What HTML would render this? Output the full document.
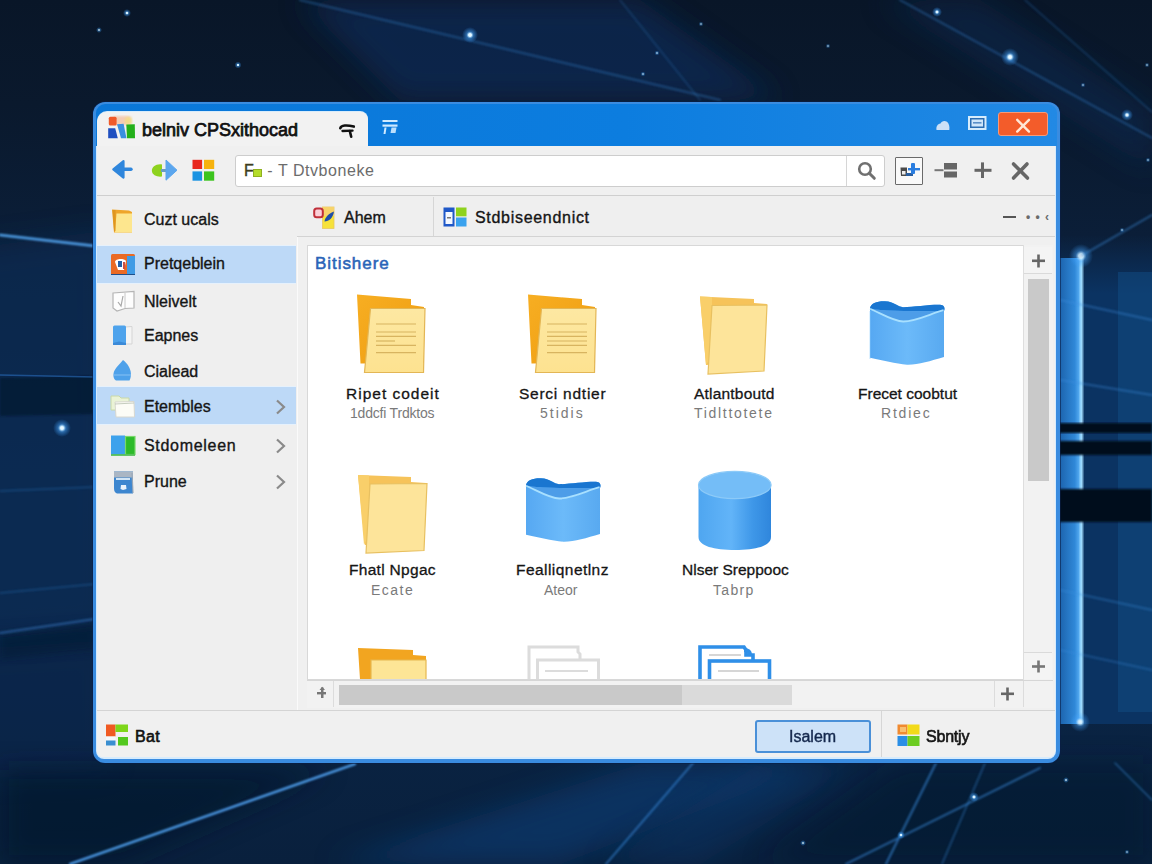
<!DOCTYPE html>
<html><head><meta charset="utf-8">
<style>
*{margin:0;padding:0;box-sizing:border-box}
html,body{width:1152px;height:864px;overflow:hidden}
body{position:relative;font-family:"Liberation Sans",sans-serif;background:#0a1a33;}
.a{position:absolute}
svg{position:absolute;overflow:visible}
#win{left:93px;top:102px;width:967px;height:661px;border-radius:12px;background:#3a8ce0;box-shadow:0 0 0 1px rgba(10,30,70,.6)}
#titlebar{left:96px;top:104px;width:961px;height:42px;background:linear-gradient(90deg,#0a77d8,#0c7ddf 55%,#2289e4);border-radius:9px 9px 0 0}
#tab{left:97px;top:112px;width:271px;height:34px;background:#f2f2f2;border-radius:10px 8px 0 0;box-shadow:0 -1px 0 #d8ecfb}
#inner{left:97px;top:146px;width:958px;height:611px;background:#f0f0f0;border-radius:0 0 6px 6px;overflow:hidden}
.t{position:absolute;white-space:nowrap;line-height:1}
.txt{color:#151515;font-size:16px;-webkit-text-stroke:.35px #151515}
#toolline{left:97px;top:195px;width:958px;height:1px;background:#cfcfcf}
#addr{left:235px;top:155px;width:650px;height:32px;background:#fff;border:1px solid #cdcdcd;border-radius:3px}
#addrdiv{left:846px;top:156px;width:1px;height:30px;background:#d6d6d6}
#sidebar{left:97px;top:196px;width:201px;height:514px;background:#efefef;border-right:1px solid #fafafa}
.sel{position:absolute;left:97px;width:199px;background:#bdd9f7;box-shadow:0 -1px 0 #e6f1fc,0 1px 0 #e6f1fc}
#tabstrip{left:297px;top:196px;width:758px;height:41px;background:#efefef;border-bottom:1px solid #d3d3d3}
#tabdiv{left:433px;top:197px;width:1px;height:39px;background:#d6d6d6}
#pane{left:307px;top:245px;width:716px;height:435px;background:#fff;border:1px solid #d8d8d8;border-right:none;overflow:hidden}
#vscroll{left:1023px;top:245px;width:30px;height:435px;background:#f2f2f2;border-left:1px solid #dedede}
#hscroll{left:307px;top:680px;width:746px;height:28px;background:#f2f2f2;border-top:1px solid #d6d6d6}
#status{left:97px;top:710px;width:958px;height:47px;background:#f0f0f0;border-top:1px solid #d4d4d4;border-radius:0 0 6px 6px}
</style></head><body>
<svg class="a" style="left:0;top:0" width="1152" height="864" viewBox="0 0 1152 864">
<defs>
<linearGradient id="bgv" x1="0" y1="0" x2="0" y2="1">
<stop offset="0" stop-color="#091628"/>
<stop offset="0.12" stop-color="#0a192d"/>
<stop offset="0.3" stop-color="#0b1f3a"/>
<stop offset="0.55" stop-color="#0b2446"/>
<stop offset="0.8" stop-color="#0a2444"/>
<stop offset="1" stop-color="#09203d"/>
</linearGradient>
<linearGradient id="panelR" x1="0" y1="0" x2="1" y2="0">
<stop offset="0" stop-color="#1a5fa8"/>
<stop offset="0.7" stop-color="#2f88d8"/>
<stop offset="1" stop-color="#6cc0ff"/>
</linearGradient>
<radialGradient id="star" cx="0.5" cy="0.5" r="0.5">
<stop offset="0" stop-color="#ffffff"/>
<stop offset="0.2" stop-color="#cfeeff"/>
<stop offset="0.45" stop-color="#4aa8ff" stop-opacity=".5"/>
<stop offset="1" stop-color="#3aa0ff" stop-opacity="0"/>
</radialGradient>
<filter id="b1" x="-10%" y="-10%" width="120%" height="120%"><feGaussianBlur stdDeviation="1"/></filter>
<filter id="b3" x="-10%" y="-10%" width="120%" height="120%"><feGaussianBlur stdDeviation="3"/></filter>
<filter id="b12" x="-30%" y="-30%" width="160%" height="160%"><feGaussianBlur stdDeviation="14"/></filter>
</defs>
<rect width="1152" height="864" fill="url(#bgv)"/>
<!-- left blue haze -->
<polygon points="-40,250 110,230 110,630 -40,640" fill="#0d3060" opacity=".45" filter="url(#b12)"/>
<polygon points="0,636 95,624 95,650 0,660" fill="#06142a" opacity=".5" filter="url(#b3)"/>
<polygon points="-40,650 110,640 110,770 -40,780" fill="#0c2c58" opacity=".3" filter="url(#b12)"/>
<!-- dark band left -->
<polygon points="0,378 95,376 95,414 0,416" fill="#06142a" opacity=".62" filter="url(#b1)"/>
<line x1="0" y1="375" x2="95" y2="377" stroke="#2f7ad0" stroke-width="1.5" opacity=".5"/>
<!-- bottom: dark left, lighter diagonal bands -->
<polygon points="0,770 330,770 120,864 0,864" fill="#061529" opacity=".6" filter="url(#b12)"/>
<polygon points="330,864 640,764 820,764 560,864" fill="#11417a" opacity=".55" filter="url(#b12)"/>
<polygon points="600,864 760,764 860,764 700,864" fill="#11417a" opacity=".35" filter="url(#b12)"/>
<polygon points="760,864 900,764 1152,764 1152,864" fill="#061529" opacity=".45" filter="url(#b12)"/>
<!-- top beams -->
<polygon points="300,0 640,0 780,100 400,100" fill="#0e2c56" opacity=".7" filter="url(#b12)"/>
<polygon points="880,0 980,0 1152,110 1152,170" fill="#0e2c52" opacity=".5" filter="url(#b12)"/>
<!-- right panel -->
<linearGradient id="pTop" x1="0" y1="0" x2="0" y2="1"><stop offset="0" stop-color="#0b3362" stop-opacity="0"/><stop offset="0.12" stop-color="#0b3362"/><stop offset="1" stop-color="#0b3362"/></linearGradient>
<rect x="1060" y="235" width="92" height="489" fill="url(#pTop)"/>
<rect x="1118" y="272" width="34" height="440" fill="#134a82" opacity=".55"/>
<rect x="1058" y="258" width="24" height="466" fill="url(#panelR)"/>
<rect x="1080" y="256" width="3" height="468" fill="#a6e0ff" filter="url(#b1)"/>
<rect x="1056" y="423" width="96" height="10" fill="#050f1f" filter="url(#b1)"/>
<rect x="1056" y="441" width="96" height="14" fill="#050f1f" filter="url(#b1)"/>
<rect x="1056" y="489" width="96" height="33" fill="#050f1f" filter="url(#b1)"/>
<circle cx="1081" cy="256" r="12" fill="url(#star)" opacity=".9"/>
<circle cx="1080" cy="722" r="10" fill="url(#star)" opacity=".8"/>
<!-- light lines -->
<g stroke="#3c8fe0" fill="none" stroke-linecap="round" filter="url(#b1)">
<line x1="0" y1="235" x2="95" y2="246" stroke-width="2.5" stroke="#5ab0ff" opacity=".9"/>
<line x1="0" y1="491" x2="95" y2="487" stroke-width="1.5" opacity=".3"/>
<line x1="0" y1="593" x2="95" y2="584" stroke-width="1.5" opacity=".3"/>
<line x1="0" y1="633" x2="95" y2="619" stroke-width="2" stroke="#3f8ee0" opacity=".5"/>
<line x1="70" y1="864" x2="355" y2="764" stroke-width="2.2" stroke="#56acff" opacity="1"/>
<line x1="693" y1="763" x2="606" y2="864" stroke-width="1.8" stroke="#3f98f0" opacity=".6"/>
<line x1="936" y1="763" x2="886" y2="864" stroke-width="1.8" stroke="#3f98f0" opacity=".6"/>
<line x1="985" y1="763" x2="942" y2="864" stroke-width="1.5" opacity=".45"/>
<line x1="1040" y1="768" x2="846" y2="864" stroke-width="1.8" stroke="#3f98f0" opacity=".6"/>
<line x1="1115" y1="763" x2="1152" y2="800" stroke-width="1.5" opacity=".5"/>
<line x1="300" y1="0" x2="720" y2="100" stroke-width="2" opacity=".35"/>
<line x1="620" y1="0" x2="700" y2="100" stroke-width="1.5" opacity=".25"/>
<line x1="900" y1="0" x2="1152" y2="138" stroke-width="1.8" opacity=".4"/>
<line x1="1025" y1="0" x2="1152" y2="112" stroke-width="1.5" opacity=".3"/>
<line x1="1081" y1="256" x2="1152" y2="215" stroke-width="1.8" opacity=".5"/>
<line x1="1060" y1="300" x2="1152" y2="320" stroke-width="2" opacity=".4"/>
<line x1="1060" y1="380" x2="1152" y2="395" stroke-width="2" opacity=".4"/>
<line x1="1060" y1="590" x2="1152" y2="610" stroke-width="2" opacity=".35"/>
<line x1="1060" y1="650" x2="1152" y2="670" stroke-width="2" opacity=".3"/>
</g>
<!-- stars -->
<g>
<circle cx="470" cy="35" r="8" fill="url(#star)"/>
<circle cx="1010" cy="57" r="9" fill="url(#star)"/>
<circle cx="937" cy="12" r="5" fill="url(#star)"/>
<circle cx="127" cy="13" r="4" fill="url(#star)"/>
<circle cx="238" cy="65" r="3.5" fill="url(#star)"/>
<circle cx="99" cy="30" r="3" fill="url(#star)" opacity=".8"/>
<circle cx="62" cy="428" r="9" fill="url(#star)"/>
<circle cx="1127" cy="115" r="6" fill="url(#star)"/>
<circle cx="1147" cy="65" r="2.5" fill="url(#star)" opacity=".7"/>
<circle cx="1148" cy="160" r="2.5" fill="url(#star)" opacity=".7"/>
<circle cx="1122" cy="230" r="2.5" fill="url(#star)" opacity=".7"/>
<circle cx="1083" cy="85" r="2.5" fill="url(#star)" opacity=".7"/>
<circle cx="657" cy="53" r="2.5" fill="url(#star)" opacity=".8"/>
<circle cx="643" cy="74" r="2.5" fill="url(#star)" opacity=".8"/>
<circle cx="701" cy="24" r="2.5" fill="url(#star)" opacity=".7"/>
<circle cx="828" cy="46" r="2.5" fill="url(#star)" opacity=".7"/>
<circle cx="974" cy="797" r="5" fill="url(#star)"/>
<circle cx="901" cy="835" r="4" fill="url(#star)"/>
<circle cx="1066" cy="780" r="3" fill="url(#star)" opacity=".8"/>
<circle cx="803" cy="843" r="3" fill="url(#star)" opacity=".8"/>
<circle cx="1127" cy="852" r="2.5" fill="url(#star)" opacity=".7"/>
</g>
</svg>
<div id="win" class="a"></div>
<div id="titlebar" class="a"></div>
<div id="tab" class="a"></div>
<div class="a" style="left:96px;top:146px;width:960px;height:613px;background:#d6ebfd;border-radius:0 0 8px 8px"></div>
<div id="inner" class="a"></div>
<div id="toolline" class="a"></div>
<div id="addr" class="a"></div>
<div id="addrdiv" class="a"></div>
<div id="sidebar" class="a"></div>
<div class="sel" style="top:246px;height:37px"></div>
<div class="sel" style="top:387px;height:37px"></div>
<div id="tabstrip" class="a"></div>
<div id="tabdiv" class="a"></div>
<div id="pane" class="a"></div>
<div id="vscroll" class="a"></div>
<div id="hscroll" class="a"></div>
<div id="status" class="a"></div>

<!-- title icon -->
<svg style="left:106px;top:114px" width="32" height="28" viewBox="0 0 32 28">
<defs><filter id="tib"><feGaussianBlur stdDeviation="1.3"/></filter></defs>
<rect x="7" y="2" width="18" height="9" rx="3" fill="#f6b48a" opacity=".6" filter="url(#tib)"/>
<rect x="19" y="3" width="7" height="8" rx="3" fill="#f3e27a" opacity=".7" filter="url(#tib)"/>
<rect x="2.8" y="2.8" width="7.8" height="8.8" rx="1.5" fill="#f05a2a"/>
<polygon points="2.2,14.2 9.2,14.2 11.8,24.3 2.2,24.3" fill="#1f4fc0"/>
<path d="M11,10.2 L17.6,9.8 L20.5,24.3 L15,24.3 Z" fill="#3a8fe0"/>
<path d="M20.3,10.6 L28.8,10.3 L29,24.3 L21,24.3 Z" fill="#24b01a"/>
</svg>
<div class="t" style="left:142px;top:121px;font-size:18px;color:#111;-webkit-text-stroke:.75px #111;letter-spacing:0px">belniv CPSxithocad</div>
<!-- Я glyph -->
<svg style="left:338px;top:123px" width="18" height="16" viewBox="0 0 18 16">
<path d="M2.3,5.2 C3,2 9,1.8 15.8,3.6" stroke="#111" stroke-width="2.6" fill="none" stroke-linecap="round"/>
<path d="M4.5,8 L14.5,7.6" stroke="#111" stroke-width="2.4" fill="none" stroke-linecap="round"/>
<path d="M11.8,8 L13.2,13.8" stroke="#111" stroke-width="2.6" fill="none" stroke-linecap="round"/>
</svg>
<!-- titlebar small icon -->
<svg style="left:381px;top:119px" width="18" height="17" viewBox="0 0 18 17">
<rect x="1.5" y="1" width="15" height="2" fill="#cfeaff"/>
<rect x="1.5" y="5.5" width="15" height="2.2" fill="#cfeaff"/>
<path d="M3.5,8.5 L5.5,8.5 L4.5,15 L2.5,15 Z" fill="#cfeaff"/>
<path d="M10.5,8.5 L15.5,8.5 L14.5,14 L9.5,14 Z" fill="#cfeaff" opacity=".9"/>
</svg>
<!-- cloud -->
<svg style="left:935px;top:118px" width="16" height="14" viewBox="0 0 16 14">
<path d="M1.5,12 C1,8.5 2.5,6 5.5,5.5 C6.5,3 9.5,2 12,3.8 C14,5.5 14.8,8.5 14.3,12 Z" fill="#cde0f6"/>
</svg>
<!-- maximize -->
<svg style="left:967px;top:115px" width="21" height="17" viewBox="0 0 21 17">
<rect x="1" y="1" width="18.5" height="14" fill="#d6ecfc"/>
<rect x="3" y="3" width="14.5" height="10" fill="#2a6db3"/>
<rect x="4.5" y="4.5" width="11.5" height="7" fill="#cfe6fa"/>
<rect x="6" y="7" width="8.5" height="1.6" fill="#5a8fc8"/>
</svg>
<!-- close -->
<div class="a" style="left:998px;top:112px;width:50px;height:24px;background:#f35c2a;border:1px solid #f79a78;border-radius:3px"></div>
<svg style="left:1014px;top:117px" width="18" height="17" viewBox="0 0 18 17">
<path d="M3.2,2.8 L15,14.6 M15,2.8 L3.2,14.6" stroke="#ffe6d6" stroke-width="2.4" stroke-linecap="round"/>
</svg>

<!-- nav icons -->
<svg style="left:110px;top:158px" width="24" height="24" viewBox="0 0 24 24">
<path d="M13.5,3.2 L3.3,11.3 L13.5,19.6 Z" fill="#2f86dc" stroke="#2f86dc" stroke-width="2.2" stroke-linejoin="round"/>
<path d="M8,11.3 L21,11.3" stroke="#2f86dc" stroke-width="3.4" stroke-linecap="round"/>
</svg>
<svg style="left:150px;top:158px" width="30" height="24" viewBox="0 0 30 24">
<path d="M12,6.4 C6,5.5 1.6,9 1.9,13 C2.2,17 7,19.2 12,18.6 Z" fill="#8ed21e"/>
<rect x="11" y="11" width="6" height="3" fill="#6a9ec0"/>
<path d="M16,2 L27,12.2 L16,22.2 Z" fill="#5ba6ee" stroke="#5ba6ee" stroke-width="1" stroke-linejoin="round"/>
</svg>
<svg style="left:192px;top:159px" width="24" height="23" viewBox="0 0 24 23">
<rect x="0.5" y="0.8" width="9.6" height="9.2" fill="#e8281e"/>
<rect x="12" y="0.8" width="10.2" height="9.2" fill="#f6b20e"/>
<rect x="0.5" y="12.4" width="9.6" height="9.3" fill="#1a93e2"/>
<rect x="12" y="12.4" width="10.2" height="9.3" fill="#3cc41e"/>
</svg>
<div class="t" style="left:244px;top:163px;font-size:16px;color:#6c6c6c;letter-spacing:.55px"><span style="color:#3d3d1e;-webkit-text-stroke:.4px #3d3d1e">F</span><span style="display:inline-block;width:9px;height:8px;background:#b4dc2a;border:1px solid #8fb020;margin-left:-1px;vertical-align:-1px"></span> - T Dtvboneke</div>
<!-- search -->
<svg style="left:856px;top:160px" width="22" height="22" viewBox="0 0 22 22">
<circle cx="9" cy="9" r="5.8" stroke="#707070" stroke-width="2.6" fill="none"/>
<path d="M13.3,13.3 L18.3,18.3" stroke="#707070" stroke-width="3" stroke-linecap="round"/>
</svg>
<!-- toolbar right icons -->
<div class="a" style="left:895px;top:157px;width:28px;height:28px;border:1.5px solid #6a6a6a;background:#f9f9f9;border-radius:1px"></div>
<svg style="left:899px;top:161px" width="22" height="18" viewBox="0 0 22 18">
<path d="M1.5,6.5 L8,6.5 L8,15 L2,15 Z" fill="#4a4a4a"/>
<rect x="3" y="10" width="3.5" height="3.5" fill="#eee"/>
<rect x="7" y="12" width="7" height="3" fill="#2b5fa0"/>
<rect x="12" y="2" width="4" height="11" rx="1" fill="#2b7ee0"/>
<rect x="9" y="7" width="12" height="2.4" fill="#2b7ee0"/>
</svg>
<svg style="left:932px;top:161px" width="27" height="18" viewBox="0 0 27 18">
<rect x="2.5" y="8.2" width="9" height="2" fill="#777"/>
<rect x="12" y="2" width="13" height="6.5" fill="#666"/>
<rect x="12" y="10.5" width="13" height="6" fill="#666"/>
</svg>
<svg style="left:973px;top:161px" width="20" height="19" viewBox="0 0 20 19">
<rect x="1.5" y="7.8" width="17" height="3" fill="#666"/>
<rect x="8" y="1.4" width="3" height="15.6" fill="#666"/>
</svg>
<svg style="left:1010px;top:161px" width="21" height="20" viewBox="0 0 21 20">
<path d="M3.5,3 L17.5,17 M17,3 L3.5,17" stroke="#666" stroke-width="3.6" stroke-linecap="round"/>
</svg>
<!-- sidebar icons -->
<svg style="left:111px;top:208px" width="24" height="26" viewBox="0 0 24 26">
<path d="M1,1.5 L18,2.5 L21,4 L21,24.5 L3,24.5 Z" fill="#eea52a"/>
<path d="M5.5,5.5 L21,5.5 L21,24.5 L4,24.5 Z" fill="#fde68e"/>
<path d="M1.5,2 L4.5,2 L4.5,23 L3,23 Z" fill="#d8901a" opacity=".7"/>
</svg>
<svg style="left:110px;top:253px" width="26" height="23" viewBox="0 0 26 23">
<rect x="1" y="1" width="24" height="21" rx="1.5" fill="#ea6a24"/>
<rect x="17" y="3" width="8" height="19" fill="#3f9be5"/>
<path d="M1,21 L25,21 L25,22 L1,22 Z" fill="#1e4f8a"/>
<path d="M5,9 C5,5.5 14,5 16,8 L14,17 L8,17 Z" fill="#ffffff"/>
<rect x="8" y="8" width="4" height="6" fill="#2260a8"/>
<rect x="13" y="9" width="2" height="7" fill="#c8504a"/>
</svg>
<svg style="left:111px;top:290px" width="25" height="23" viewBox="0 0 25 23">
<path d="M2,3 L23,1.5 L23,18 L14,18.5 L6,21 L2,18 Z" fill="#fdfdfd" stroke="#b5b5b5" stroke-width="1.2"/>
<path d="M14,3 L14,18" stroke="#c8c8c8" stroke-width="1"/>
<path d="M7,12 L10,16 L12,6" stroke="#a8a8a8" stroke-width="1.2" fill="none"/>
</svg>
<svg style="left:112px;top:324px" width="22" height="23" viewBox="0 0 22 23">
<path d="M13,3 L20,2.5 L20,20 L13,20 Z" fill="#f4f4f4" stroke="#d5d5d5" stroke-width="1"/>
<rect x="1" y="1.5" width="13" height="19.5" rx="1.5" fill="#4ea3ec"/>
<path d="M1,19 L7,17.5 L14,19 L14,21 L1,21 Z" fill="#3b8ad8"/>
</svg>
<svg style="left:112px;top:358px" width="21" height="24" viewBox="0 0 21 24">
<path d="M4,22.5 C1,21 0.8,16 2.5,12.5 C4.5,8.5 8,6 11,2 C13,3.5 15.5,6 17,9 C19,12.5 20,18 17.5,22.5 Z" fill="#4ea1ea"/>
<path d="M2,17 L19,17" stroke="#7dbdf2" stroke-width="1.2"/>
</svg>
<svg style="left:109px;top:394px" width="28" height="25" viewBox="0 0 28 25">
<path d="M2,2 L10,2 L12,4 L20,4 L20,16 L2,16 Z" fill="#eaf3d6" stroke="#c8d8a8" stroke-width="1"/>
<path d="M6,8 L25,7.5 L25.5,23 L7,23 Z" fill="#fcfcf6" stroke="#d8d8d0" stroke-width="1"/>
<path d="M6,10 L25,9" stroke="#b8c0b0" stroke-width=".8"/>
</svg>
<svg style="left:110px;top:434px" width="27" height="23" viewBox="0 0 27 23">
<rect x="1" y="1.5" width="14" height="19.5" fill="#3ea2ec"/>
<rect x="15.5" y="2.5" width="9.5" height="18" fill="#2cba2a" stroke="#78d86a" stroke-width="1.2"/>
<path d="M1,21 L25,21" stroke="#55c05a" stroke-width="1.8"/>
</svg>
<svg style="left:112px;top:470px" width="23" height="25" viewBox="0 0 23 25">
<path d="M2,1.5 L21,1.5 L21,23.5 L6,23.5 C3,23.5 2,21 2,18 Z" fill="#3d86cf"/>
<rect x="2" y="1.5" width="19" height="6" fill="#aab6c4"/>
<rect x="4" y="8" width="14" height="2" fill="#d0e4f6"/>
<path d="M9,15 L14,15 L14.5,19 L11,20 L8.5,19 Z" fill="#e8f2fb"/>
<path d="M20,3 L21,23" stroke="#9aa8b8" stroke-width="1.2"/>
</svg>
<div class="t txt" style="left:144px;top:212px">Cuzt ucals</div>
<div class="t txt" style="left:144px;top:256px">Pretqeblein</div>
<div class="t txt" style="left:144px;top:294px">Nleivelt</div>
<div class="t txt" style="left:144px;top:328px">Eapnes</div>
<div class="t txt" style="left:144px;top:364px">Cialead</div>
<div class="t txt" style="left:144px;top:399px">Etembles</div>
<div class="t txt" style="left:144px;top:438px;letter-spacing:.7px">Stdomeleen</div>
<div class="t txt" style="left:144px;top:474px">Prune</div>
<svg style="left:274px;top:398px" width="14" height="18" viewBox="0 0 14 18">
<path d="M3,2.5 L10,9 L3,15.5" stroke="#8a8a8a" stroke-width="2.2" fill="none"/>
</svg>
<svg style="left:274px;top:437px" width="14" height="18" viewBox="0 0 14 18">
<path d="M3,2.5 L10,9 L3,15.5" stroke="#8a8a8a" stroke-width="2.2" fill="none"/>
</svg>
<svg style="left:274px;top:473px" width="14" height="18" viewBox="0 0 14 18">
<path d="M3,2.5 L10,9 L3,15.5" stroke="#8a8a8a" stroke-width="2.2" fill="none"/>
</svg>

<!-- tabstrip -->
<svg style="left:312px;top:206px" width="24" height="24" viewBox="0 0 24 24">
<rect x="10.5" y="1" width="11.5" height="21.5" fill="#f6e23a" stroke="#e8c860" stroke-width=".8"/>
<rect x="10.5" y="1" width="11.5" height="9" fill="#f7d36a"/>
<path d="M22,5.5 C21,12 17,15.5 12.5,15.5 C13,11 17,7.5 22,5.5 Z" fill="#1f4fa8"/>
<rect x="2.2" y="2.5" width="8.6" height="8.8" rx="2.5" fill="#fbd0d8" stroke="#c0303a" stroke-width="2"/>
</svg>
<div class="t txt" style="left:344px;top:210px">Ahem</div>
<svg style="left:442px;top:206px" width="26" height="22" viewBox="0 0 26 22">
<rect x="1.5" y="1.5" width="11" height="19" fill="#1f58c8"/>
<rect x="3.5" y="6" width="7" height="12" fill="#f4f8ff"/>
<rect x="5" y="11" width="4" height="1.5" fill="#777"/>
<rect x="14" y="1.5" width="10.5" height="8.8" fill="#8ed21e"/>
<rect x="14" y="11.5" width="10.5" height="9" fill="#3aa2ee"/>
</svg>
<div class="t txt" style="left:475px;top:210px;letter-spacing:.7px">Stdbiseendnict</div>
<div class="a" style="left:1003px;top:216px;width:13px;height:2px;background:#555"></div>
<div class="t" style="left:1026px;top:211px;font-size:12px;color:#6a6a6a;letter-spacing:1px;font-weight:bold">• • ‹</div>
<div class="t" style="left:315px;top:255px;font-size:17px;color:#2a64b8;-webkit-text-stroke:.55px #2a64b8;letter-spacing:.95px">Bitishere</div>
<svg width="0" height="0" style="left:0;top:0">
<defs>
<linearGradient id="fback" x1="0" y1="0" x2="1" y2="1"><stop offset="0" stop-color="#f7ae22"/><stop offset="1" stop-color="#ee9c10"/></linearGradient>
<linearGradient id="fpage" x1="0" y1="0" x2="0" y2="1"><stop offset="0" stop-color="#fde8a2"/><stop offset="1" stop-color="#fde290"/></linearGradient>
<linearGradient id="bfold" x1="0" y1="0" x2="1" y2="0"><stop offset="0" stop-color="#56a8f2"/><stop offset=".5" stop-color="#6cbaf9"/><stop offset="1" stop-color="#58a9f0"/></linearGradient>
<linearGradient id="cyl" x1="0" y1="0" x2="1" y2="0"><stop offset="0" stop-color="#4fa6f0"/><stop offset=".45" stop-color="#62b4f8"/><stop offset=".75" stop-color="#3e97e8"/><stop offset="1" stop-color="#2f86dc"/></linearGradient>
</defs>
</svg>
<!-- row 1 -->
<svg style="left:355px;top:293px" width="72" height="81" viewBox="0 0 72 81">
<path d="M2,1.5 L56,6 L56,12 L69,14 L69,70 L5.5,70.5 Z" fill="url(#fback)"/>
<path d="M15.5,15.5 L70,15.5 L68.5,79.5 L9.5,79.5 Z" fill="url(#fpage)" stroke="#e3b655" stroke-width="1.2"/>
<g stroke="#d8b460" stroke-width="1.2">
<line x1="21" y1="31" x2="61" y2="31"/><line x1="21" y1="39" x2="61" y2="39"/><line x1="21" y1="43.3" x2="61" y2="43.3"/>
<line x1="21" y1="48" x2="40" y2="48"/><line x1="21" y1="52.4" x2="61" y2="52.4"/><line x1="21" y1="59.7" x2="61" y2="59.7"/>
</g>
</svg>
<svg style="left:526px;top:293px" width="72" height="81" viewBox="0 0 72 81">
<path d="M2,1.5 L56,6 L56,12 L69,14 L69,70 L5.5,70.5 Z" fill="url(#fback)"/>
<path d="M15.5,15.5 L70,15.5 L68.5,79.5 L9.5,79.5 Z" fill="url(#fpage)" stroke="#e3b655" stroke-width="1.2"/>
<g stroke="#d8b460" stroke-width="1.2">
<line x1="21" y1="31" x2="61" y2="31"/><line x1="21" y1="39" x2="61" y2="39"/><line x1="21" y1="43.3" x2="61" y2="43.3"/>
<line x1="21" y1="48" x2="61" y2="48"/><line x1="21" y1="52.4" x2="61" y2="52.4"/><line x1="21" y1="59.7" x2="61" y2="59.7"/>
</g>
</svg>
<svg style="left:698px;top:295px" width="72" height="81" viewBox="0 0 72 81">
<path d="M2,1.5 L56,4 L56,8 L69,9 L62,66 L8,70 Z" fill="#f6c35a"/>
<path d="M2,1.5 L14,2 L14,60 L8,70 Z" fill="#f9cf6a"/>
<path d="M14,10.5 L69,10 L66,76 L10,79 Z" fill="#fde49a" stroke="#e8c060" stroke-width="1.2"/>
</svg>
<svg style="left:868px;top:299px" width="78" height="68" viewBox="0 0 78 68">
<path d="M2,10 C2,4 10,2 17,2.3 C26,2.6 30,8 35,8.2 C46,8 62,5.5 72,5.8 C77,6 77,10 76,12 L76,58 C62,62 50,66 39,65.7 C28,65 14,61 2,58.8 Z" fill="url(#bfold)"/>
<path d="M2,10 C2,4 10,2 17,2.3 C26,2.6 30,8 35,8.2 C46,8 62,5.5 72,5.8 C77,6 77,10 76,12 C62,12 48,12.5 36,12.1 C24,11.8 12,11 2,10.2 Z" fill="#1a76d0"/>
<path d="M2,10.2 C12,11 24,11.8 36,12.1 C48,12.5 62,12 76,12 C62,16 48,22.5 35.3,22.5 C26,22.5 14,15 2,9.7 Z" fill="#4d9de8"/>
<path d="M2,9.7 C14,15 26,22.5 35.3,22.5 C48,22.5 62,15 75.6,11.2" stroke="#a8e0ff" stroke-width="1.8" fill="none"/>
<path d="M2,12 L2,60" stroke="#8fd0ff" stroke-width="1" opacity=".6"/>
</svg>
<div class="t" style="left:346px;top:386px;font-size:15.5px;color:#151515;letter-spacing:1px;-webkit-text-stroke:.3px #151515">Ripet codeit</div>
<div class="t" style="left:350px;top:406px;font-size:14px;color:#7a7a7a;letter-spacing:-.2px">1ddcfi Trdktos</div>
<div class="t" style="left:519px;top:386px;font-size:15.5px;color:#151515;letter-spacing:.75px;-webkit-text-stroke:.3px #151515">Serci ndtier</div>
<div class="t" style="left:540px;top:406px;font-size:14px;color:#7a7a7a;letter-spacing:2px">5tidis</div>
<div class="t" style="left:694px;top:386px;font-size:15.5px;color:#151515;letter-spacing:.2px;-webkit-text-stroke:.3px #151515">Atlantboutd</div>
<div class="t" style="left:694px;top:406px;font-size:14px;color:#7a7a7a;letter-spacing:1.7px">Tidlttotete</div>
<div class="t" style="left:858px;top:386px;font-size:15.5px;color:#151515;-webkit-text-stroke:.3px #151515">Frecet coobtut</div>
<div class="t" style="left:881px;top:406px;font-size:14px;color:#7a7a7a;letter-spacing:1.8px">Rtdiec</div>
<!-- row 2 -->
<svg style="left:356px;top:473px" width="74" height="82" viewBox="0 0 74 82">
<path d="M2,2 L55,4 L55,9 L70,10 L64,68 L9,72 Z" fill="#f6c35a"/>
<path d="M2,2 L13,2.5 L13,62 L8,72 Z" fill="#f9cf6a"/>
<path d="M14,11 L71,10.5 L68,77.5 L10,80 Z" fill="#fde49a" stroke="#e8c060" stroke-width="1.2"/>
</svg>
<svg style="left:524px;top:476px" width="78" height="68" viewBox="0 0 78 68">
<path d="M2,10 C2,4 10,2 17,2.3 C26,2.6 30,8 35,8.2 C46,8 62,5.5 72,5.8 C77,6 77,10 76,12 L76,58 C62,62 50,66 39,65.7 C28,65 14,61 2,58.8 Z" fill="url(#bfold)"/>
<path d="M2,10 C2,4 10,2 17,2.3 C26,2.6 30,8 35,8.2 C46,8 62,5.5 72,5.8 C77,6 77,10 76,12 C62,12 48,12.5 36,12.1 C24,11.8 12,11 2,10.2 Z" fill="#1a76d0"/>
<path d="M2,10.2 C12,11 24,11.8 36,12.1 C48,12.5 62,12 76,12 C62,16 48,22.5 35.3,22.5 C26,22.5 14,15 2,9.7 Z" fill="#4d9de8"/>
<path d="M2,9.7 C14,15 26,22.5 35.3,22.5 C48,22.5 62,15 75.6,11.2" stroke="#a8e0ff" stroke-width="1.8" fill="none"/>
</svg>
<svg style="left:696px;top:469px" width="78" height="84" viewBox="0 0 78 84">
<path d="M2.5,16 L2.5,68 C2.5,77 18,81 39,81 C60,81 75,77 75,68 L75,16 Z" fill="url(#cyl)"/>
<ellipse cx="38.8" cy="16" rx="36.3" ry="13.6" fill="#74bdf7" stroke="#8ccaf8" stroke-width="1.2"/>
</svg>
<div class="t" style="left:349px;top:562px;font-size:15.5px;color:#151515;letter-spacing:.3px;-webkit-text-stroke:.3px #151515">Fhatl Npgac</div>
<div class="t" style="left:371px;top:583px;font-size:14px;color:#7a7a7a;letter-spacing:1.5px">Ecate</div>
<div class="t" style="left:516px;top:562px;font-size:15.5px;color:#151515;letter-spacing:.45px;-webkit-text-stroke:.3px #151515">Fealliqnetlnz</div>
<div class="t" style="left:544px;top:583px;font-size:14px;color:#7a7a7a;">Ateor</div>
<div class="t" style="left:682px;top:562px;font-size:15.5px;color:#151515;-webkit-text-stroke:.3px #151515">Nlser Sreppooc</div>
<div class="t" style="left:713px;top:583px;font-size:14px;color:#7a7a7a;letter-spacing:1.3px">Tabrp</div>
<!-- row 3 (clipped) -->
<div class="a" style="left:308px;top:600px;width:714px;height:79px;overflow:hidden">
<svg style="left:48px;top:45px" width="74" height="50" viewBox="0 0 74 50">
<path d="M2,3 L57,5 L57,10 L70,11 L70,50 L5,50 Z" fill="#f2a520"/>
<path d="M15,15 L70,15 L70,50 L15,50 Z" fill="#fde596" stroke="#e6b850" stroke-width="1.2"/>
</svg>
<svg style="left:218px;top:44px" width="76" height="50" viewBox="0 0 76 50">
<path d="M3,3 L52,3 L52,8 L54,10 L54,50 L3,50 Z" fill="none" stroke="#dcdcdc" stroke-width="3"/>
<rect x="11.5" y="16" width="61" height="40" fill="#fff" stroke="#dcdcdc" stroke-width="3"/>
<line x1="19" y1="27" x2="62" y2="27" stroke="#d0d0d0" stroke-width="1.5"/>
</svg>
<svg style="left:389px;top:43px" width="76" height="50" viewBox="0 0 76 50">
<path d="M3,4 L47,4 L49,7 L49,12 L56,12 L56,50 L3,50 Z" fill="#fff" stroke="#2f8fe8" stroke-width="3.6"/>
<path d="M47,7 C52,7 53,10 53,12" stroke="#2f8fe8" stroke-width="4" fill="none"/>
<rect x="12.5" y="18" width="60" height="36" fill="#fff" stroke="#2f8fe8" stroke-width="3.6"/>
<line x1="12" y1="12" x2="44" y2="12" stroke="#c8c8c8" stroke-width="1.5"/>
<line x1="21" y1="28" x2="62" y2="28" stroke="#c8c8c8" stroke-width="1.5"/>
</svg>
</div>
<!-- scrollbars -->
<div class="a" style="left:1024px;top:247px;width:28px;height:27px;background:#f4f4f4;border-bottom:1px solid #dadada"></div>
<svg style="left:1031px;top:253px" width="16" height="16" viewBox="0 0 16 16"><rect x="1" y="6.5" width="13" height="2.6" fill="#666"/><rect x="6.2" y="1.5" width="2.6" height="13" fill="#666"/></svg>
<div class="a" style="left:1028px;top:279px;width:21px;height:202px;background:#c9c9c9"></div>
<div class="a" style="left:1024px;top:652px;width:28px;height:27px;background:#f4f4f4;border-top:1px solid #dadada"></div>
<svg style="left:1031px;top:659px" width="16" height="16" viewBox="0 0 16 16"><rect x="1" y="6.2" width="13" height="2.6" fill="#777"/><rect x="6.2" y="1.5" width="2.6" height="12" fill="#777"/></svg>
<div class="a" style="left:333px;top:681px;width:1px;height:26px;background:#dcdcdc"></div>
<svg style="left:314px;top:685px" width="16" height="16" viewBox="0 0 16 16"><rect x="3" y="7" width="9" height="2.4" fill="#777"/><path d="M7,2.5 L9.5,2.5 L9.5,13 L7,13 Z" fill="#777"/><path d="M5.5,5 L8.2,1.8 L11,5 Z" fill="#777"/></svg>
<div class="a" style="left:339px;top:685px;width:343px;height:20px;background:#c9c9c9"></div>
<div class="a" style="left:682px;top:685px;width:110px;height:20px;background:#dadada"></div>
<div class="a" style="left:994px;top:681px;width:1px;height:26px;background:#dcdcdc"></div>
<div class="a" style="left:1023px;top:681px;width:1px;height:26px;background:#dcdcdc"></div>
<svg style="left:999px;top:686px" width="17" height="16" viewBox="0 0 17 16"><rect x="2" y="6.5" width="13" height="2.6" fill="#666"/><rect x="7.2" y="1.5" width="2.6" height="13" fill="#666"/></svg>

<!-- status bar -->
<svg style="left:105px;top:723px" width="25" height="24" viewBox="0 0 25 24">
<rect x="1" y="1.5" width="9.5" height="12" fill="#f05a22"/>
<rect x="10.5" y="1.5" width="12.5" height="7.5" fill="#7ed61a"/>
<rect x="1" y="13.5" width="9.5" height="4" fill="#f4f8fb"/>
<rect x="1" y="17.5" width="9.5" height="5" fill="#3a8ed0"/>
<rect x="13" y="14" width="10" height="8.5" fill="#52c81e"/>
</svg>
<div class="t" style="left:135px;top:729px;font-size:16px;color:#111;-webkit-text-stroke:.6px #111;letter-spacing:.3px">Bat</div>
<div class="a" style="left:755px;top:720px;width:116px;height:33px;background:#cde2f8;border:2px solid #4a90d8;border-radius:3px"></div>
<div class="t" style="left:789px;top:729px;font-size:16px;color:#14284d;-webkit-text-stroke:.4px #14284d">Isalem</div>
<div class="a" style="left:881px;top:711px;width:1px;height:46px;background:#d6d6d6"></div>
<svg style="left:897px;top:724px" width="24" height="23" viewBox="0 0 24 23">
<rect x="0.5" y="0.5" width="10" height="10" fill="#f08a30"/>
<rect x="3" y="3" width="6" height="5" fill="#f8c070"/>
<rect x="10.5" y="0.5" width="12" height="10" fill="#f2da1a"/>
<rect x="0.5" y="12" width="10" height="10" fill="#2a8ee6"/>
<rect x="10.5" y="12" width="12" height="10" fill="#6ccc22"/>
</svg>
<div class="t txt" style="left:926px;top:729px;-webkit-text-stroke:.6px #151515;letter-spacing:-.2px">Sbntjy</div>
</body></html>
